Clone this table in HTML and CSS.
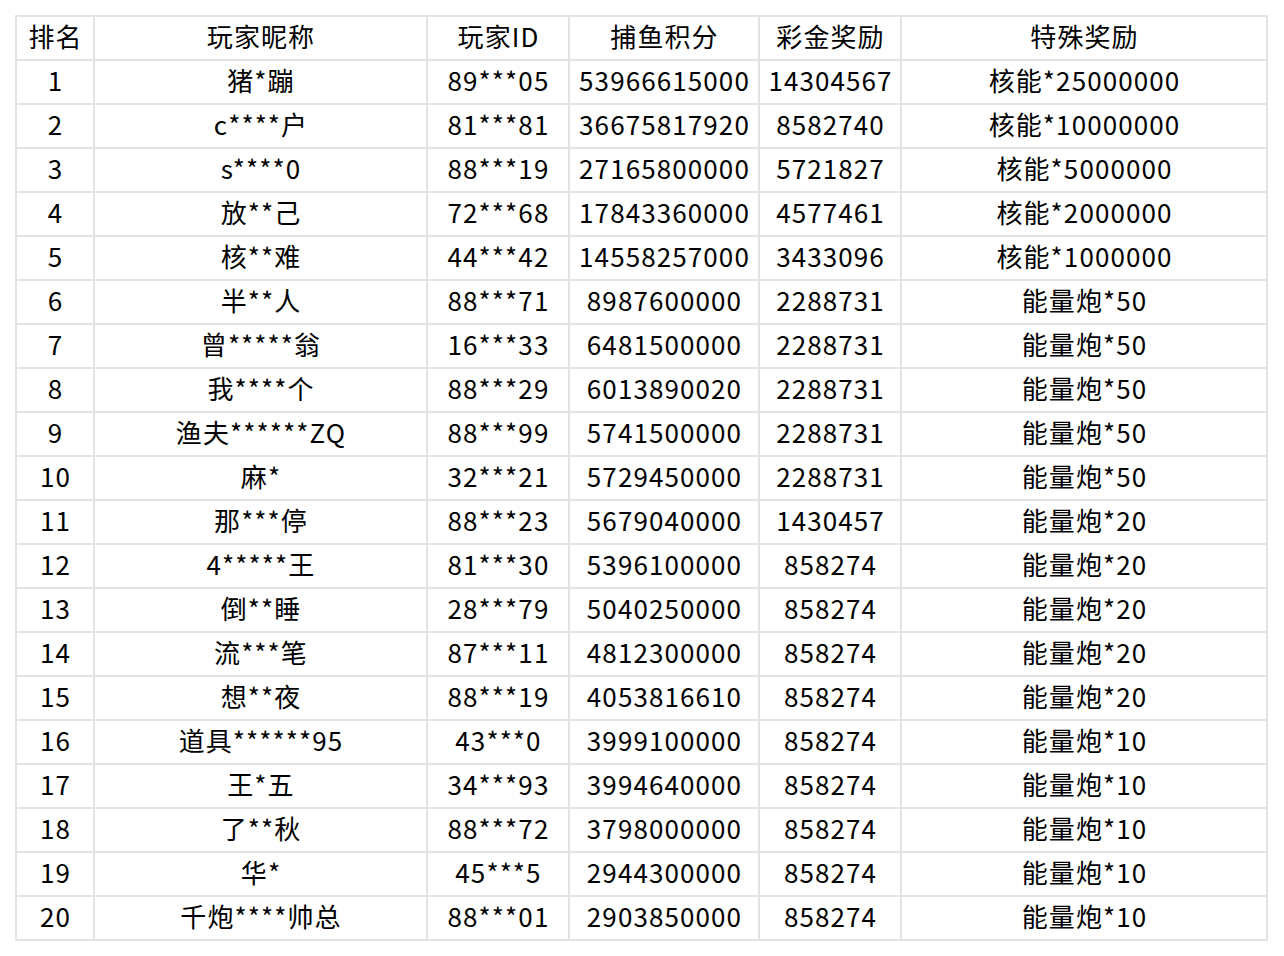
FILE: index.html
```html
<!DOCTYPE html>
<html lang="zh-CN">
<head>
<meta charset="utf-8">
<title>捕鱼排行榜</title>
<link rel="stylesheet" href="styles.css">
</head>
<body>
<table class="rank">
  <colgroup>
    <col class="c-rank">
    <col class="c-name">
    <col class="c-id">
    <col class="c-score">
    <col class="c-bonus">
    <col class="c-special">
  </colgroup>
  <thead>
    <tr><th>排名</th><th>玩家昵称</th><th>玩家ID</th><th>捕鱼积分</th><th>彩金奖励</th><th>特殊奖励</th></tr>
  </thead>
  <tbody>
    <tr><td>1</td><td>猪*蹦</td><td>89***05</td><td>53966615000</td><td>14304567</td><td>核能*25000000</td></tr>
    <tr><td>2</td><td>c****户</td><td>81***81</td><td>36675817920</td><td>8582740</td><td>核能*10000000</td></tr>
    <tr><td>3</td><td>s****0</td><td>88***19</td><td>27165800000</td><td>5721827</td><td>核能*5000000</td></tr>
    <tr><td>4</td><td>放**己</td><td>72***68</td><td>17843360000</td><td>4577461</td><td>核能*2000000</td></tr>
    <tr><td>5</td><td>核**难</td><td>44***42</td><td>14558257000</td><td>3433096</td><td>核能*1000000</td></tr>
    <tr><td>6</td><td>半**人</td><td>88***71</td><td>8987600000</td><td>2288731</td><td>能量炮*50</td></tr>
    <tr><td>7</td><td>曾*****翁</td><td>16***33</td><td>6481500000</td><td>2288731</td><td>能量炮*50</td></tr>
    <tr><td>8</td><td>我****个</td><td>88***29</td><td>6013890020</td><td>2288731</td><td>能量炮*50</td></tr>
    <tr><td>9</td><td>渔夫******ZQ</td><td>88***99</td><td>5741500000</td><td>2288731</td><td>能量炮*50</td></tr>
    <tr><td>10</td><td>麻*</td><td>32***21</td><td>5729450000</td><td>2288731</td><td>能量炮*50</td></tr>
    <tr><td>11</td><td>那***停</td><td>88***23</td><td>5679040000</td><td>1430457</td><td>能量炮*20</td></tr>
    <tr><td>12</td><td>4*****王</td><td>81***30</td><td>5396100000</td><td>858274</td><td>能量炮*20</td></tr>
    <tr><td>13</td><td>倒**睡</td><td>28***79</td><td>5040250000</td><td>858274</td><td>能量炮*20</td></tr>
    <tr><td>14</td><td>流***笔</td><td>87***11</td><td>4812300000</td><td>858274</td><td>能量炮*20</td></tr>
    <tr><td>15</td><td>想**夜</td><td>88***19</td><td>4053816610</td><td>858274</td><td>能量炮*20</td></tr>
    <tr><td>16</td><td>道具******95</td><td>43***0</td><td>3999100000</td><td>858274</td><td>能量炮*10</td></tr>
    <tr><td>17</td><td>王*五</td><td>34***93</td><td>3994640000</td><td>858274</td><td>能量炮*10</td></tr>
    <tr><td>18</td><td>了**秋</td><td>88***72</td><td>3798000000</td><td>858274</td><td>能量炮*10</td></tr>
    <tr><td>19</td><td>华*</td><td>45***5</td><td>2944300000</td><td>858274</td><td>能量炮*10</td></tr>
    <tr><td>20</td><td>千炮****帅总</td><td>88***01</td><td>2903850000</td><td>858274</td><td>能量炮*10</td></tr>
  </tbody>
</table>
</body>
</html>
```
FILE: styles.css
```css
html, body {
  margin: 0;
  padding: 0;
  background: #ffffff;
}

body {
  padding: 15px 0 0 15px;
  font-family: "Noto Sans CJK SC", "Noto Sans", sans-serif;
  color: #000000;
}

.rank {
  border-collapse: separate;
  border-spacing: 0;
  table-layout: fixed;
  width: 1253px;
  border-top: 2px solid #e3e3e3;
  border-left: 2px solid #e3e3e3;
}

.c-rank { width: 78px; }
.c-name { width: 333px; }
.c-id { width: 142px; }
.c-score { width: 190px; }
.c-bonus { width: 142px; }
.c-special { width: 366px; }

.rank th,
.rank td {
  height: 38px;
  padding: 0 0 4px 1px;
  border-right: 2px solid #e3e3e3;
  border-bottom: 2px solid #e3e3e3;
  text-align: center;
  vertical-align: middle;
  font-size: 26px;
  font-weight: 400;
  line-height: 38px;
  letter-spacing: 1.1px;
  white-space: nowrap;
  overflow: hidden;
}
```
